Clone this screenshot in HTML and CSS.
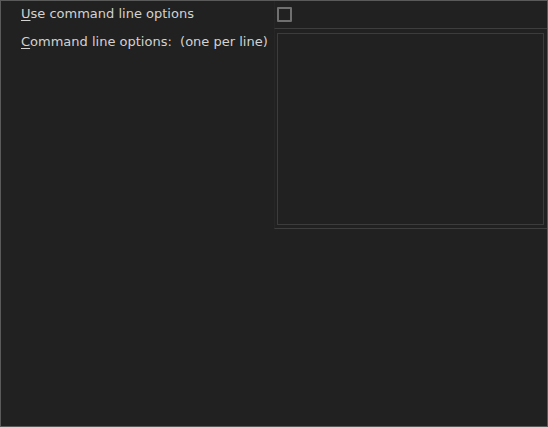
FILE: index.html
```html
<!DOCTYPE html>
<html lang="en">
<head>
    <meta charset="UTF-8">
    <title>Command line options</title>
    <link rel="stylesheet" href="styles.css">
</head>
<body>
    <div class="window">
        <div class="label"><u>U</u>se command line options</div>
        <div class="cell cell-top">
            <span class="checkbox"></span>
        </div>
        <div class="label"><u>C</u>ommand line options:&nbsp; (one per line)</div>
        <div class="cell cell-options">
            <textarea class="options" spellcheck="false"></textarea>
        </div>
    </div>
</body>
</html>
```

FILE: styles.css
```css
body {
    margin: 0;
    background-color: #212121;
    font-family: "DejaVu Sans", sans-serif;
    font-size: 13px;
    color: #d2d2d2;
}

.window {
    width: 548px;
    height: 427px;
    box-sizing: border-box;
    border: 1px solid #5a5a5a;
    background-color: #212121;
    display: grid;
    grid-template-columns: 273px 1fr;
    grid-template-rows: 28px 200px;
}

.label {
    padding-left: 20px;
    padding-top: 5px;
    white-space: nowrap;
}

.label u {
    text-underline-offset: 2px;
}

.cell {
    border-left: 1px solid #262626;
    border-bottom: 1px solid #3e3e3e;
    padding-left: 2px;
}

.cell-top {
    display: flex;
    align-items: center;
}

.checkbox {
    width: 15px;
    height: 15px;
    box-sizing: border-box;
    border: 2px solid #707070;
    border-radius: 1px;
}

.cell-options {
    padding-top: 4px;
}

.options {
    display: block;
    width: 267px;
    height: 192px;
    box-sizing: border-box;
    margin: 0;
    border: 1px solid #3c3c3c;
    background-color: #212121;
    resize: none;
    outline: none;
}
```
